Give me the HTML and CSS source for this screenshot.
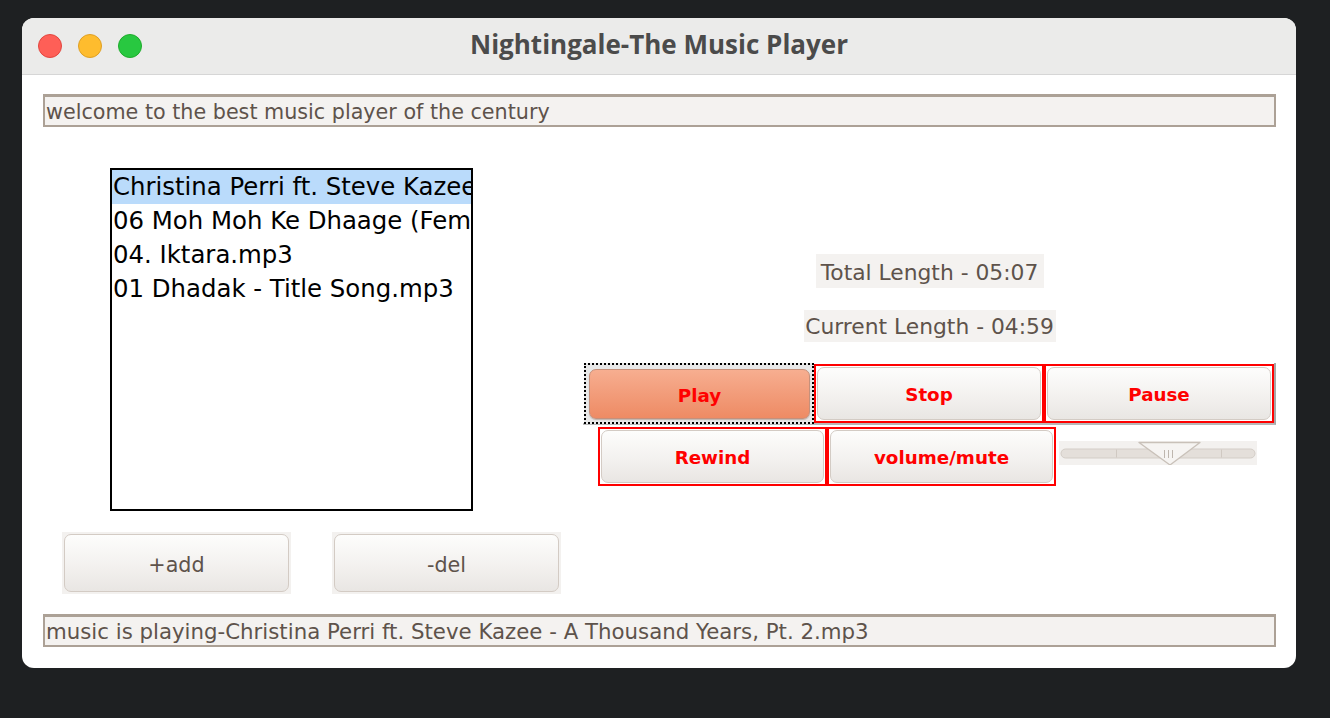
FILE: index.html
```html
<!DOCTYPE html>
<html>
<head>
<meta charset="utf-8">
<title>Nightingale-The Music Player</title>
<link rel="stylesheet" href="styles.css">
</head>
<body>
<div class="window">
  <div class="titlebar">
    <div class="lights">
      <span class="light red"></span>
      <span class="light yellow"></span>
      <span class="light green"></span>
    </div>
    <div class="title">Nightingale-The Music Player</div>
    <div class="spacer"></div>
  </div>
  <div class="content">
    <div class="field">welcome to the best music player of the century</div>
    <div class="main">
      <div class="left">
        <ul class="list">
          <li class="sel">Christina Perri ft. Steve Kazee - A Thousand Years, Pt. 2.mp3</li>
          <li>06 Moh Moh Ke Dhaage (Female).mp3</li>
          <li>04. Iktara.mp3</li>
          <li>01 Dhadak - Title Song.mp3</li>
        </ul>
        <div class="listbtns">
          <div class="pbtn"><button class="aqua plain">+add</button></div>
          <div class="pbtn"><button class="aqua plain">-del</button></div>
        </div>
      </div>
      <div class="right">
        <div class="label l1">Total Length - 05:07</div>
        <div class="label l2">Current Length - 04:59</div>
        <div class="row1">
          <div class="focus"><button class="aqua play red-text">Play</button></div>
          <div class="redbox"><button class="aqua red-text">Stop</button></div>
          <div class="redbox"><button class="aqua red-text">Pause</button></div>
        </div>
        <div class="row2">
          <div class="redbox rewind"><button class="aqua red-text">Rewind</button></div>
          <div class="redbox"><button class="aqua red-text">volume/mute</button></div>
          <div class="slider">
            <svg width="198" height="24" viewBox="0 0 198 24">
              <rect x="2" y="8" width="194" height="9" rx="4.5" fill="#e4dfda" stroke="#d3cdc7" stroke-width="1"/>
              <line x1="57.5" y1="8.5" x2="57.5" y2="16.5" stroke="#d0c9c2" stroke-width="1"/>
              <line x1="162.5" y1="8.5" x2="162.5" y2="16.5" stroke="#d0c9c2" stroke-width="1"/>
              <path d="M80 1.5 L141 1.5 L111 24 Z" fill="#f6f4f2" stroke="#c9c1b9" stroke-width="1.3" stroke-linejoin="round"/>
              <line x1="105.5" y1="9" x2="105.5" y2="17" stroke="#beb6ae" stroke-width="1"/>
              <line x1="109.5" y1="9" x2="109.5" y2="17" stroke="#beb6ae" stroke-width="1"/>
              <line x1="113.5" y1="9" x2="113.5" y2="17" stroke="#beb6ae" stroke-width="1"/>
            </svg>
          </div>
        </div>
      </div>
    </div>
    <div class="field bottom">music is playing-Christina Perri ft. Steve Kazee - A Thousand Years, Pt. 2.mp3</div>
  </div>
</div>
</body>
</html>
```

FILE: styles.css
```css
html, body {
  margin: 0;
  padding: 0;
}
body {
  background: #1e2022;
  width: 1330px;
  height: 718px;
  overflow: hidden;
  padding: 18px 0 0 22px;
  box-sizing: border-box;
  font-family: "DejaVu Sans", "Liberation Sans", sans-serif;
}
.window {
  width: 1274px;
  height: 650px;
  background: #ffffff;
  border-radius: 12px;
  overflow: hidden;
}
.titlebar {
  height: 56px;
  background: #ebebea;
  border-bottom: 1px solid #d6d6d6;
  display: grid;
  grid-template-columns: 1fr auto 1fr;
  align-items: center;
}
.lights {
  display: flex;
  gap: 16px;
  padding-left: 16px;
}
.light {
  width: 24px;
  height: 24px;
  border-radius: 50%;
  box-sizing: border-box;
}
.light.red { background: #fe5f57; border: 1px solid #e2463f; }
.light.yellow { background: #febc2e; border: 1px solid #dfa024; }
.light.green { background: #28c840; border: 1px solid #1eac2c; }
.title {
  font-family: "Open Sans", "Liberation Sans", sans-serif;
  font-weight: 700;
  font-size: 26px;
  line-height: 30px;
  color: #4b4b4b;
  padding-bottom: 4px;
}
.content {
  padding: 19px 0 0 21px;
}
.field {
  width: 1233px;
  height: 33px;
  box-sizing: border-box;
  background: #f4f2f0;
  border: 2px solid #aca196;
  border-top-width: 3px;
  color: #5e534b;
  font-size: 20.7px;
  line-height: 30px;
  padding-left: 1px;
  white-space: nowrap;
  overflow: hidden;
}
.field.bottom {
  margin-top: 20px;
  font-size: 21.3px;
}
.main {
  display: flex;
}
.left {
  margin-left: 19px;
  width: 499px;
  padding-top: 41px;
}
.list {
  list-style: none;
  margin: 0 0 0 48px;
  padding: 0;
  width: 363px;
  height: 343px;
  box-sizing: border-box;
  border: 2px solid #000;
  overflow: hidden;
}
.list li {
  height: 34px;
  line-height: 34px;
  font-size: 24.4px;
  color: #000;
  padding-left: 1px;
  white-space: nowrap;
  overflow: hidden;
}
.list li.sel {
  background: #badbfb;
}
.listbtns {
  display: flex;
  gap: 41px;
  margin-top: 21px;
}
.pbtn {
  width: 229px;
  height: 62px;
  background: #f3f1ef;
  padding: 2px;
  box-sizing: border-box;
}
.aqua {
  display: block;
  width: 100%;
  height: 100%;
  margin: 0;
  padding: 0;
  box-sizing: border-box;
  border: 1px solid #d3cbc4;
  border-radius: 7px;
  background: linear-gradient(#fdfdfc, #f3f1ef 55%, #e9e6e3);
  font-family: "DejaVu Sans", "Liberation Sans", sans-serif;
}
.aqua.plain {
  color: #5e534b;
  font-size: 20.7px;
  padding-top: 3px;
}
.red-text {
  color: #ff0000;
  font-weight: 700;
  font-size: 18.3px;
  padding-top: 2px;
}
.right {
  margin-left: 22px;
  width: 693px;
  padding-top: 127px;
}
.label {
  margin: 0 auto;
  background: #f4f2f0;
  color: #5e534b;
  font-size: 21.8px;
  text-align: center;
  white-space: nowrap;
}
.l1 {
  width: 228px;
  height: 34px;
  line-height: 37px;
}
.l2 {
  margin-top: 22px;
  width: 252px;
  height: 32px;
  line-height: 34px;
}
.row1 {
  margin-top: 21px;
  display: flex;
  align-items: flex-start;
  width: 693px;
  height: 62px;
  box-sizing: border-box;
  border-right: 2px solid #a7a7a7;
  border-bottom: 2px solid #b8b8b8;
}
.focus {
  margin-left: 1px;
  width: 230px;
  height: 61px;
  box-sizing: border-box;
  border: 2px dotted #000;
  padding: 4px 2px 3px 3px;
  background: #e8e8e8;
}
.aqua.play {
  background: linear-gradient(#f7ae90, #f29c7a 50%, #ee8b64);
  border: 1px solid #c5907b;
  box-shadow: 0 1px 1px rgba(120, 80, 60, 0.35);
}
.redbox {
  width: 230px;
  height: 59px;
  margin-top: 1px;
  box-sizing: border-box;
  border: 2px solid #ff0000;
  padding: 1px;
  background: #ffffff;
}
.row2 {
  margin-top: 2px;
  display: flex;
  align-items: flex-start;
}
.row2 .redbox {
  width: 229px;
  margin-top: 0;
}
.rewind {
  margin-left: 15px;
}
.slider {
  margin-left: 3px;
  margin-top: 14px;
  width: 198px;
  height: 24px;
  background: #f3f1ef;
}
.slider svg {
  display: block;
}
```
